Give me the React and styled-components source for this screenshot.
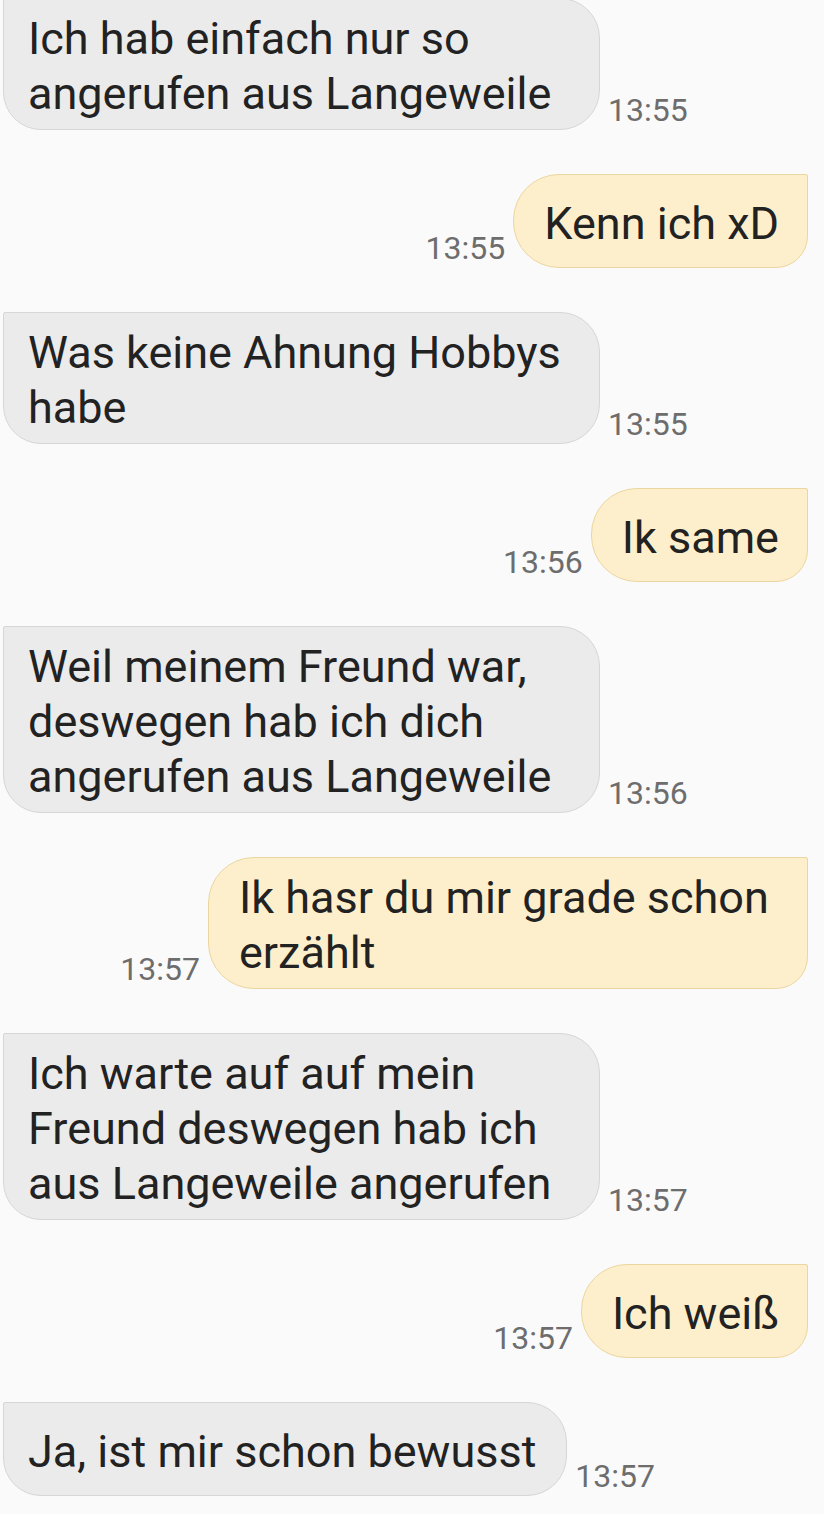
import React from 'react';
import styled, { createGlobalStyle } from 'styled-components';

const GlobalStyle = createGlobalStyle`
  html, body {
    margin: 0;
    padding: 0;
    background: #fafafa;
  }
  body {
    font-family: Roboto, "Noto Sans", "Liberation Sans", sans-serif;
    -webkit-font-smoothing: antialiased;
  }
`;

const StyledThread = styled.div`
  width: 824px;
  height: 1514px;
  overflow: hidden;
  background: #fafafa;
  display: flex;
  flex-direction: column;
  gap: 44px;
  margin-top: -2px;
`;

const StyledRow = styled.div`
  display: flex;
  flex-direction: ${(p) => (p.$sent ? 'row-reverse' : 'row')};
  align-items: flex-end;
  gap: 8px;
  padding: ${(p) => (p.$sent ? '0 16px 0 0' : '0 0 0 3px')};
`;

const StyledBubble = styled.div`
  box-sizing: border-box;
  max-width: ${(p) => (p.$sent ? '600px' : '597px')};
  min-height: 94px;
  display: flex;
  align-items: center;
  padding: ${(p) => (p.$sent ? '12px 28px 8px 30px' : '12px 30px 8px 24px')};
  font-size: 45px;
  line-height: 55px;
  color: #222222;
  background: ${(p) => (p.$sent ? '#fdefcc' : '#ebebeb')};
  border: 1.5px solid ${(p) => (p.$sent ? '#ecd69f' : '#d6d6d6')};
  border-radius: ${(p) => (p.$sent ? '46px 2px 32px 46px' : '2px 40px 40px 38px')};
`;

const StyledTime = styled.span`
  font-size: 32px;
  line-height: 1;
  color: #6d6d6d;
  padding-bottom: 4px;
  white-space: nowrap;
`;

const messages = [
  { sent: false, text: 'Ich hab einfach nur so angerufen aus Langeweile', time: '13:55' },
  { sent: true, text: 'Kenn ich xD', time: '13:55' },
  { sent: false, text: 'Was keine Ahnung Hobbys habe', time: '13:55' },
  { sent: true, text: 'Ik same', time: '13:56' },
  { sent: false, text: 'Weil meinem Freund war, deswegen hab ich dich angerufen aus Langeweile', time: '13:56' },
  { sent: true, text: 'Ik hasr du mir grade schon erzählt', time: '13:57' },
  { sent: false, text: 'Ich warte auf auf mein Freund deswegen hab ich aus Langeweile angerufen', time: '13:57' },
  { sent: true, text: 'Ich weiß', time: '13:57' },
  { sent: false, text: 'Ja, ist mir schon bewusst', time: '13:57' },
];

const App = () => (
  <>
    <GlobalStyle />
    <StyledThread>
      {messages.map((m, i) => (
        <StyledRow key={i} $sent={m.sent}>
          <StyledBubble $sent={m.sent}>{m.text}</StyledBubble>
          <StyledTime>{m.time}</StyledTime>
        </StyledRow>
      ))}
    </StyledThread>
  </>
);

export default App;
